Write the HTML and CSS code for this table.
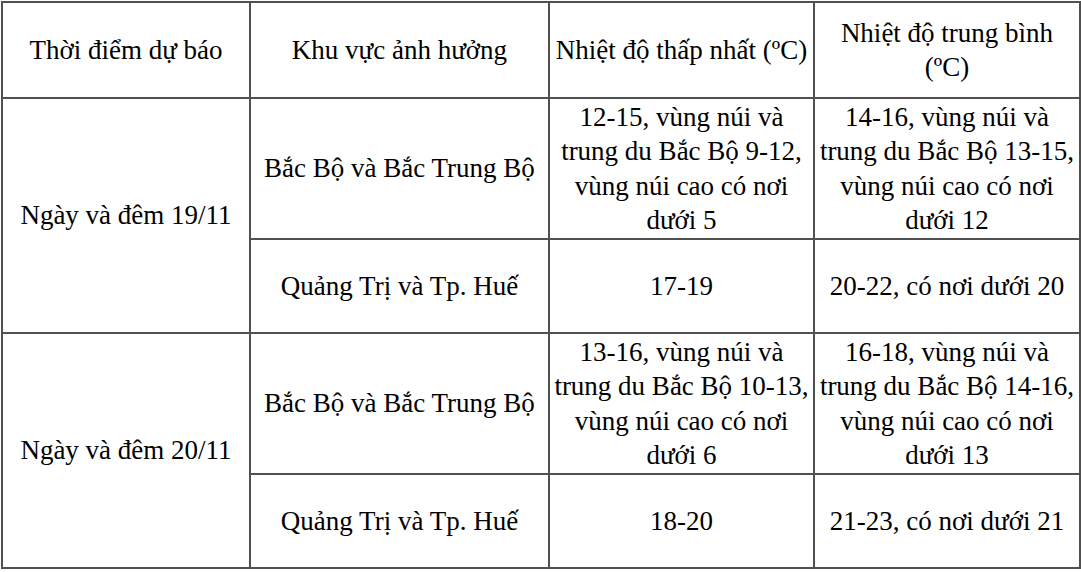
FILE: index.html
```html
<!DOCTYPE html>
<html>
<head>
<meta charset="utf-8">
<link rel="stylesheet" href="styles.css">
</head>
<body>
<table class="forecast">
  <colgroup>
    <col class="c1"><col class="c2"><col class="c3"><col class="c4">
  </colgroup>
  <tr class="head">
    <td>Thời điểm dự báo</td>
    <td>Khu vực ảnh hưởng</td>
    <td>Nhiệt độ thấp nhất (ºC)</td>
    <td>Nhiệt độ trung bình (ºC)</td>
  </tr>
  <tr class="tall">
    <td rowspan="2">Ngày và đêm 19/11</td>
    <td>Bắc Bộ và Bắc Trung Bộ</td>
    <td>12-15, vùng núi và trung du Bắc Bộ 9-12, vùng núi cao có nơi dưới 5</td>
    <td>14-16, vùng núi và trung du Bắc Bộ 13-15, vùng núi cao có nơi dưới 12</td>
  </tr>
  <tr class="short">
    <td>Quảng Trị và Tp. Huế</td>
    <td>17-19</td>
    <td>20-22, có nơi dưới 20</td>
  </tr>
  <tr class="tall">
    <td rowspan="2">Ngày và đêm 20/11</td>
    <td>Bắc Bộ và Bắc Trung Bộ</td>
    <td>13-16, vùng núi và trung du Bắc Bộ 10-13, vùng núi cao có nơi dưới 6</td>
    <td>16-18, vùng núi và trung du Bắc Bộ 14-16, vùng núi cao có nơi dưới 13</td>
  </tr>
  <tr class="short">
    <td>Quảng Trị và Tp. Huế</td>
    <td>18-20</td>
    <td>21-23, có nơi dưới 21</td>
  </tr>
</table>
</body>
</html>
```
FILE: styles.css
```css
html, body {
  margin: 0;
  padding: 0;
  background: #fff;
}
body {
  padding: 1px 0 0 1px;
}
.forecast {
  border-collapse: collapse;
  table-layout: fixed;
  width: 1080px;
  font-family: "Liberation Serif", "Times New Roman", serif;
  font-size: 27px;
  line-height: 34.5px;
  color: #000;
}
.forecast td {
  border: 2px solid #505050;
  text-align: center;
  vertical-align: middle;
  padding: 0 3px;
}
.c1 { width: 248px; }
.c2 { width: 299px; }
.c3 { width: 265px; }
.c4 { width: 266px; }
.head td { height: 94px; }
.tall td { height: 139px; }
.short td { height: 92px; }
```
